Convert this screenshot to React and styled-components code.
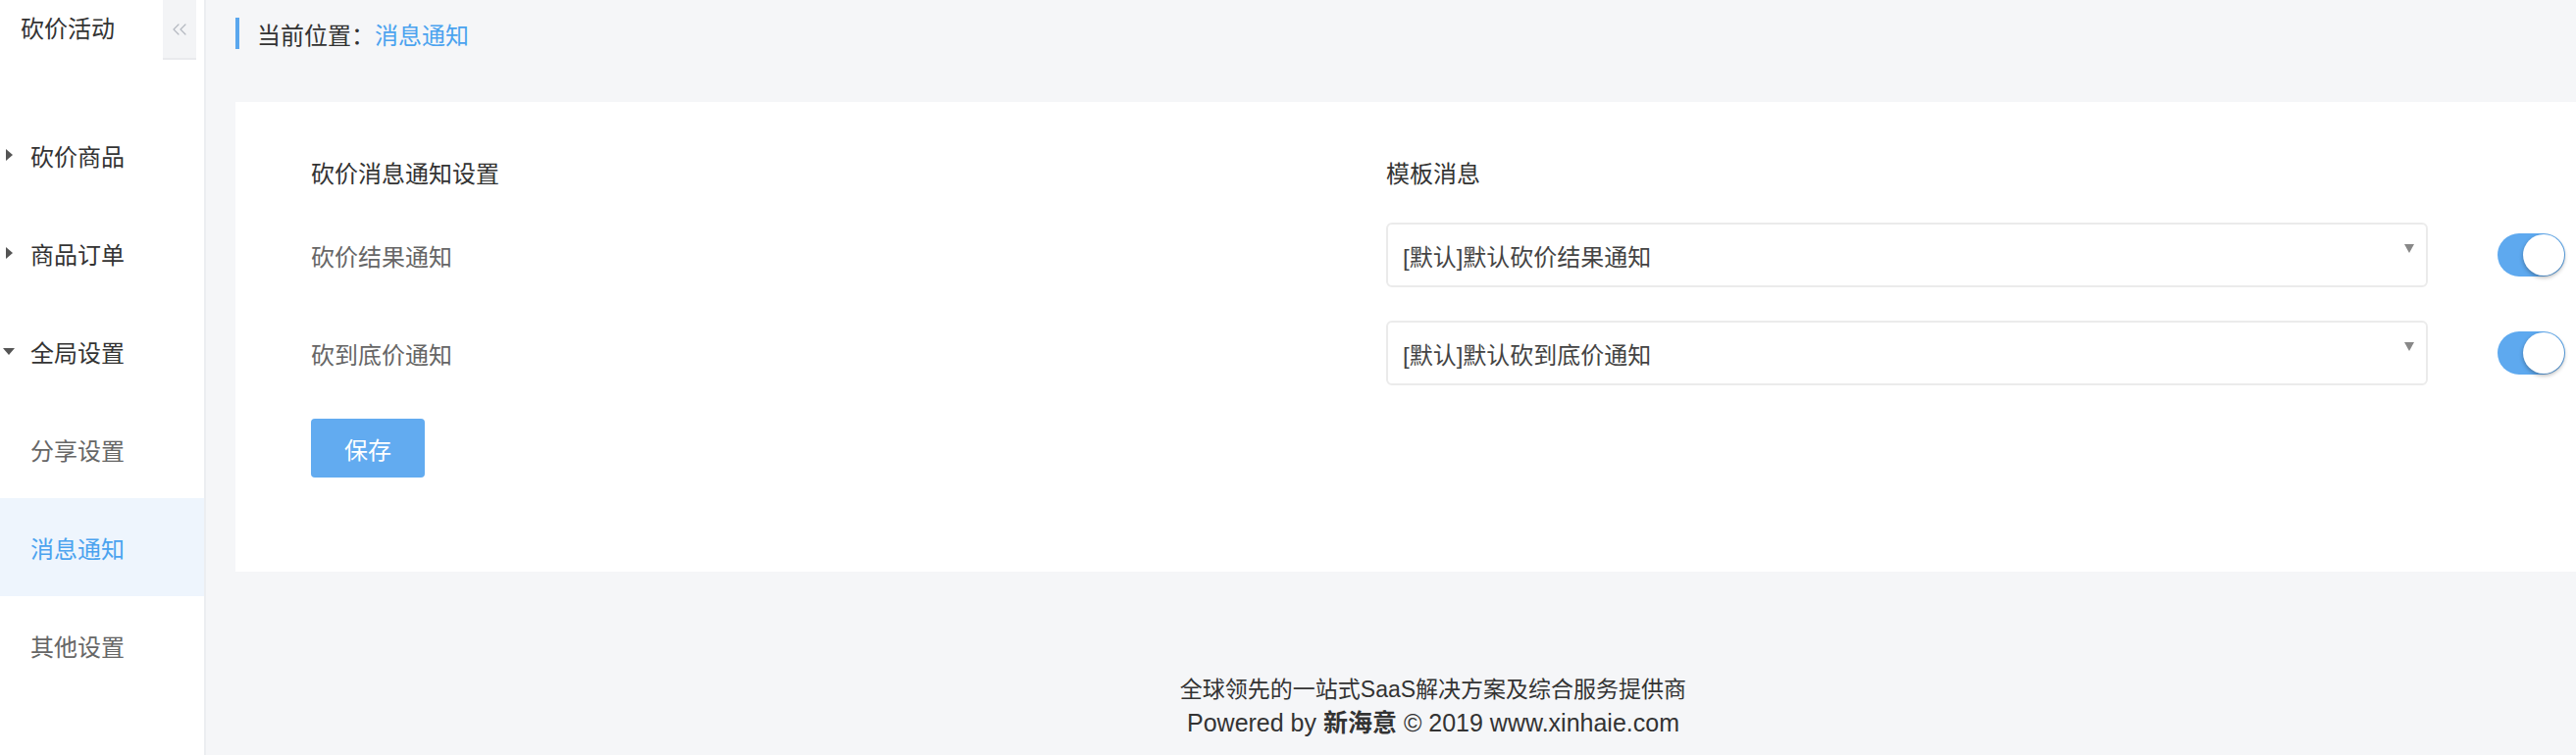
import React from 'react'
import styled, { createGlobalStyle } from 'styled-components'
import { ChevronsLeft } from 'lucide-react'

const GlobalStyle = createGlobalStyle`
  html, body {
    margin: 0;
    padding: 0;
    background: #f5f6f8;
  }
  body {
    font-family: "Liberation Sans", "Noto Sans CJK SC", sans-serif;
    color: #333;
  }
  * { box-sizing: border-box; }
`

const menu = [
  { id: 1, text: '砍价商品', level: 0, caret: 'right' },
  { id: 2, text: '商品订单', level: 0, caret: 'right' },
  { id: 3, text: '全局设置', level: 0, caret: 'down' },
  { id: 4, text: '分享设置', level: 1 },
  { id: 5, text: '消息通知', level: 1, active: true },
  { id: 6, text: '其他设置', level: 1 },
]

const notices = [
  { id: 1, label: '砍价结果通知', value: '[默认]默认砍价结果通知' },
  { id: 2, label: '砍到底价通知', value: '[默认]默认砍到底价通知' },
]

const App = () => {
  return (
    <Page>
      <GlobalStyle />
      <Sidebar>
        <SidebarHeader>
          <SidebarTitle>砍价活动</SidebarTitle>
          <CollapseBtn type='button'>
            <ChevronsLeft size={24} strokeWidth={1.2} />
          </CollapseBtn>
        </SidebarHeader>
        <Menu>
          {menu.map(({ id, text, level, caret, active }) => (
            <MenuItem key={id} $level={level} $active={active}>
              <CaretSlot>{caret && <Caret $dir={caret} />}</CaretSlot>
              {text}
            </MenuItem>
          ))}
        </Menu>
      </Sidebar>

      <Main>
        <Breadcrumb>
          <span>当前位置：</span>
          <Current>消息通知</Current>
        </Breadcrumb>

        <Card>
          <FormGrid>
            <Row>
              <HeadText>砍价消息通知设置</HeadText>
              <HeadText>模板消息</HeadText>
            </Row>
            {notices.map(({ id, label, value }) => (
              <Row key={id}>
                <Label>{label}</Label>
                <Select>
                  <span>{value}</span>
                  <Arrow />
                </Select>
                <Toggle>
                  <Knob />
                </Toggle>
              </Row>
            ))}
            <div>
              <SaveBtn type='button'>保存</SaveBtn>
            </div>
          </FormGrid>
        </Card>

        <Footer>
          <FooterLine>全球领先的一站式SaaS解决方案及综合服务提供商</FooterLine>
          <FooterLine $latin>
            Powered by <b>新海意</b> © 2019 www.xinhaie.com
          </FooterLine>
        </Footer>
      </Main>
    </Page>
  )
}

const Page = styled.div`
  display: flex;
  min-height: 100vh;
`

const Sidebar = styled.aside`
  width: 210px;
  flex-shrink: 0;
  background: #fff;
  border-right: 2px solid #eceef1;
`

const SidebarHeader = styled.div`
  display: flex;
  height: 61px;
`

const SidebarTitle = styled.div`
  flex: 1;
  padding-left: 21px;
  line-height: 60px;
  font-size: 24px;
  color: #333;
`

const CollapseBtn = styled.button`
  width: 34px;
  flex-shrink: 0;
  margin: 0 8px 0 0;
  padding: 18px 0 0;
  border: none;
  border-bottom: 2px solid #e9eaed;
  background: #f3f4f6;
  color: #b3b8c0;
  display: flex;
  justify-content: center;
  align-items: flex-start;
  svg {
    flex-shrink: 0;
  }
`

const Menu = styled.ul`
  list-style: none;
  margin: 47px 0 0;
  padding: 0;
`

const MenuItem = styled.li`
  display: flex;
  align-items: center;
  height: 100px;
  font-size: 24px;
  color: ${({ $active, $level }) => ($active ? '#4ba3ef' : $level ? '#666' : '#333')};
  background: ${({ $active }) => ($active ? '#eef5fd' : 'transparent')};
`

const CaretSlot = styled.span`
  width: 31px;
  display: flex;
  align-items: center;
`

const Caret = styled.span`
  width: 0;
  height: 0;
  ${({ $dir }) =>
    $dir === 'down'
      ? `
    margin-left: 3px;
    border-top: 7px solid #555;
    border-left: 6.5px solid transparent;
    border-right: 6.5px solid transparent;
  `
      : `
    margin-left: 6px;
    border-left: 7px solid #555;
    border-top: 6px solid transparent;
    border-bottom: 6px solid transparent;
  `}
`

const Main = styled.main`
  flex: 1;
  display: flex;
  flex-direction: column;
  background: #f5f6f8;
  min-width: 0;
`

const Breadcrumb = styled.div`
  display: flex;
  align-items: center;
  height: 32px;
  margin: 18px 0 54px 30px;
  padding-left: 18px;
  border-left: 4px solid #5aa7ee;
  font-size: 24px;
  color: #333;
`

const Current = styled.span`
  color: #4ba3ef;
`

const Card = styled.section`
  margin-left: 30px;
  background: #fff;
  padding: 59px 0 96px 77px;
`

const FormGrid = styled.div`
  display: flex;
  flex-direction: column;
  gap: 34px;
`

const Row = styled.div`
  display: grid;
  grid-template-columns: 1096px 1062px auto;
  align-items: center;
`

const HeadText = styled.div`
  font-size: 24px;
  line-height: 30px;
  color: #333;
`

const Label = styled.div`
  font-size: 24px;
  color: #666;
`

const Select = styled.div`
  height: 66px;
  display: flex;
  justify-content: space-between;
  align-items: center;
  padding: 0 12px 0 15px;
  border: 2px solid #ebebeb;
  border-radius: 6px;
  font-size: 24px;
  color: #444;
`

const Arrow = styled.span`
  align-self: flex-start;
  margin-top: 20px;
  width: 0;
  height: 0;
  border-top: 9px solid #888;
  border-left: 5.5px solid transparent;
  border-right: 5.5px solid transparent;
`

const Toggle = styled.div`
  margin-left: 71px;
  width: 69px;
  height: 44px;
  border-radius: 22px;
  background: #5ea9ef;
  display: flex;
  align-items: center;
  justify-content: flex-end;
  padding-right: 1px;
`

const Knob = styled.span`
  width: 42px;
  height: 42px;
  border-radius: 50%;
  background: #fff;
  box-shadow: 0 2px 4px rgba(0, 0, 0, 0.3);
`

const SaveBtn = styled.button`
  width: 116px;
  height: 60px;
  border: none;
  border-radius: 4px;
  background: #62abf0;
  color: #fff;
  font-family: inherit;
  font-size: 24px;
`

const Footer = styled.footer`
  margin-top: 103px;
  padding-left: 86px;
  text-align: center;
  color: #333;
  b {
    font-weight: 700;
  }
`

const FooterLine = styled.div`
  font-size: ${({ $latin }) => ($latin ? '25px' : '23px')};
  line-height: 34px;
`

export default App
